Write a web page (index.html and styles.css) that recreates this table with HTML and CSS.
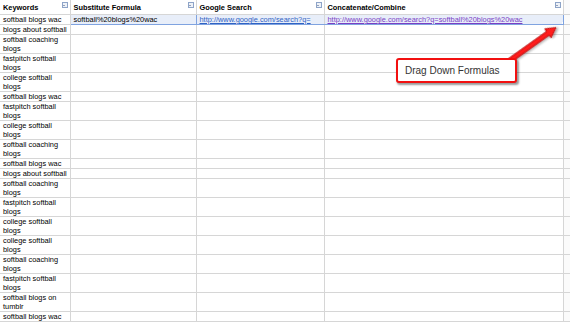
FILE: index.html
```html
<!DOCTYPE html>
<html>
<head>
<meta charset="utf-8">
<link rel="stylesheet" href="styles.css">
</head>
<body>
<div class="sheet">
<table class="grid">
  <colgroup>
    <col class="c1"><col class="c2"><col class="c3"><col class="c4"><col class="c5">
  </colgroup>
  <thead>
    <tr class="head">
      <th>Keywords<span class="dd"></span></th>
      <th>Substitute Formula<span class="dd"></span></th>
      <th>Google Search<span class="dd"></span></th>
      <th>Concatenate/Combine<span class="dd"></span></th>
      <th class="edge"></th>
    </tr>
  </thead>
  <tbody>
    <tr class="sel">
      <td>softball blogs wac</td>
      <td class="s s-first">softball%20blogs%20wac</td>
      <td class="s"><a class="link">http://www.google.com/search?q=</a></td>
      <td class="s s-last"><a class="link visited">http://www.google.com/search?q=softball%20blogs%20wac</a><span class="handle"></span></td>
      <td class="edge"></td>
    </tr>
    <tr><td>blogs about softball</td><td></td><td></td><td></td><td class="edge"></td></tr>
    <tr><td>softball coaching blogs</td><td></td><td></td><td></td><td class="edge"></td></tr>
    <tr><td>fastpitch softball blogs</td><td></td><td></td><td></td><td class="edge"></td></tr>
    <tr><td>college softball blogs</td><td></td><td></td><td></td><td class="edge"></td></tr>
    <tr><td>softball blogs wac</td><td></td><td></td><td></td><td class="edge"></td></tr>
    <tr><td>fastpitch softball blogs</td><td></td><td></td><td></td><td class="edge"></td></tr>
    <tr><td>college softball blogs</td><td></td><td></td><td></td><td class="edge"></td></tr>
    <tr><td>softball coaching blogs</td><td></td><td></td><td></td><td class="edge"></td></tr>
    <tr><td>softball blogs wac</td><td></td><td></td><td></td><td class="edge"></td></tr>
    <tr><td>blogs about softball</td><td></td><td></td><td></td><td class="edge"></td></tr>
    <tr><td>softball coaching blogs</td><td></td><td></td><td></td><td class="edge"></td></tr>
    <tr><td>fastpitch softball blogs</td><td></td><td></td><td></td><td class="edge"></td></tr>
    <tr><td>college softball blogs</td><td></td><td></td><td></td><td class="edge"></td></tr>
    <tr><td>college softball blogs</td><td></td><td></td><td></td><td class="edge"></td></tr>
    <tr><td>softball coaching blogs</td><td></td><td></td><td></td><td class="edge"></td></tr>
    <tr><td>fastpitch softball blogs</td><td></td><td></td><td></td><td class="edge"></td></tr>
    <tr><td>softball blogs on tumblr</td><td></td><td></td><td></td><td class="edge"></td></tr>
    <tr><td>softball blogs wac</td><td></td><td></td><td></td><td class="edge"></td></tr>
  </tbody>
</table>

<svg class="arrow" width="570" height="322" viewBox="0 0 570 322">
  <defs>
    <filter id="sh" x="-20%" y="-20%" width="140%" height="140%">
      <feDropShadow dx="1.5" dy="1.5" stdDeviation="1" flood-color="#000" flood-opacity="0.35"/>
    </filter>
  </defs>
  <g filter="url(#sh)" transform="translate(556,27.5) rotate(-35.5)">
    <polygon points="-57,-2.2 -10,-2.2 -10,-5.5 0,0 -10,5.5 -10,2.2 -57,2.2" fill="#ff1a1a" stroke="#b00000" stroke-width="0.8" stroke-linejoin="round"/>
  </g>
</svg>

<div class="callout">Drag Down Formulas</div>
</div>
</body>
</html>
```

FILE: styles.css
```css
html, body {
  margin: 0;
  padding: 0;
  background: #fff;
}

.sheet {
  position: relative;
  width: 570px;
  height: 322px;
  overflow: hidden;
}

.grid {
  border-collapse: collapse;
  table-layout: fixed;
  width: 570px;
  font-family: "Liberation Sans", Arial, sans-serif;
  font-size: 7.4px;
  line-height: 9px;
  color: #000;
}

.c1 { width: 70px; }
.c2 { width: 126px; }
.c3 { width: 128px; }
.c4 { width: 239px; }
.c5 { width: 7px; }

.grid th,
.grid td {
  border: 1px solid #d6d6d6;
  padding: 0 0 0 3px;
  vertical-align: top;
  text-align: left;
  overflow: hidden;
  white-space: normal;
}

.grid tr > :first-child { border-left: none; }

.grid th {
  position: relative;
  height: 13px;
  border-top: none;
  font-weight: bold;
  color: #000;
  line-height: 13px;
  padding-top: 1px;
  white-space: nowrap;
}

.grid th.edge,
.grid td.edge {
  border-right: none;
  background: #fbfbfb;
  padding: 0;
}

.dd {
  position: absolute;
  right: 2px;
  top: 2px;
  width: 4px;
  height: 4px;
  border: 1px solid #8ea4c8;
  background: #eef2f8;
}

.dd::after {
  content: "";
  position: absolute;
  left: 0.5px;
  top: 1.5px;
  border-left: 1.5px solid transparent;
  border-right: 1.5px solid transparent;
  border-top: 1.5px solid #3a4f78;
}

.sel td.s {
  position: relative;
  background: #e8eef9;
  border-top: 1px solid #7fa3e0;
  border-bottom: 1px solid #7fa3e0;
  white-space: nowrap;
}

.sel td.s-first {
  border-left: 1px solid #7fa3e0;
  border-right: 1px solid #7fa3e0;
}

.sel td.s-last {
  border-right: 1px solid #7fa3e0;
}

.link {
  color: #2f62c4;
  text-decoration: underline;
}

.link.visited {
  color: #7a3fc4;
}

.handle {
  position: absolute;
  right: -3px;
  bottom: -2px;
  width: 4px;
  height: 4px;
  background: #3f7be0;
  border: 1px solid #fff;
  box-sizing: border-box;
}

.arrow {
  position: absolute;
  left: 0;
  top: 0;
  pointer-events: none;
}

.callout {
  position: absolute;
  left: 396px;
  top: 58px;
  width: 110px;
  height: 21px;
  border: 2px solid #f21010;
  border-radius: 3px;
  background: #fff;
  box-shadow: 1.5px 2px 2px rgba(0, 0, 0, 0.4);
  font-family: "Liberation Sans", Arial, sans-serif;
  font-size: 10px;
  line-height: 21px;
  color: #333;
  padding-left: 7px;
  box-sizing: content-box;
}
```
